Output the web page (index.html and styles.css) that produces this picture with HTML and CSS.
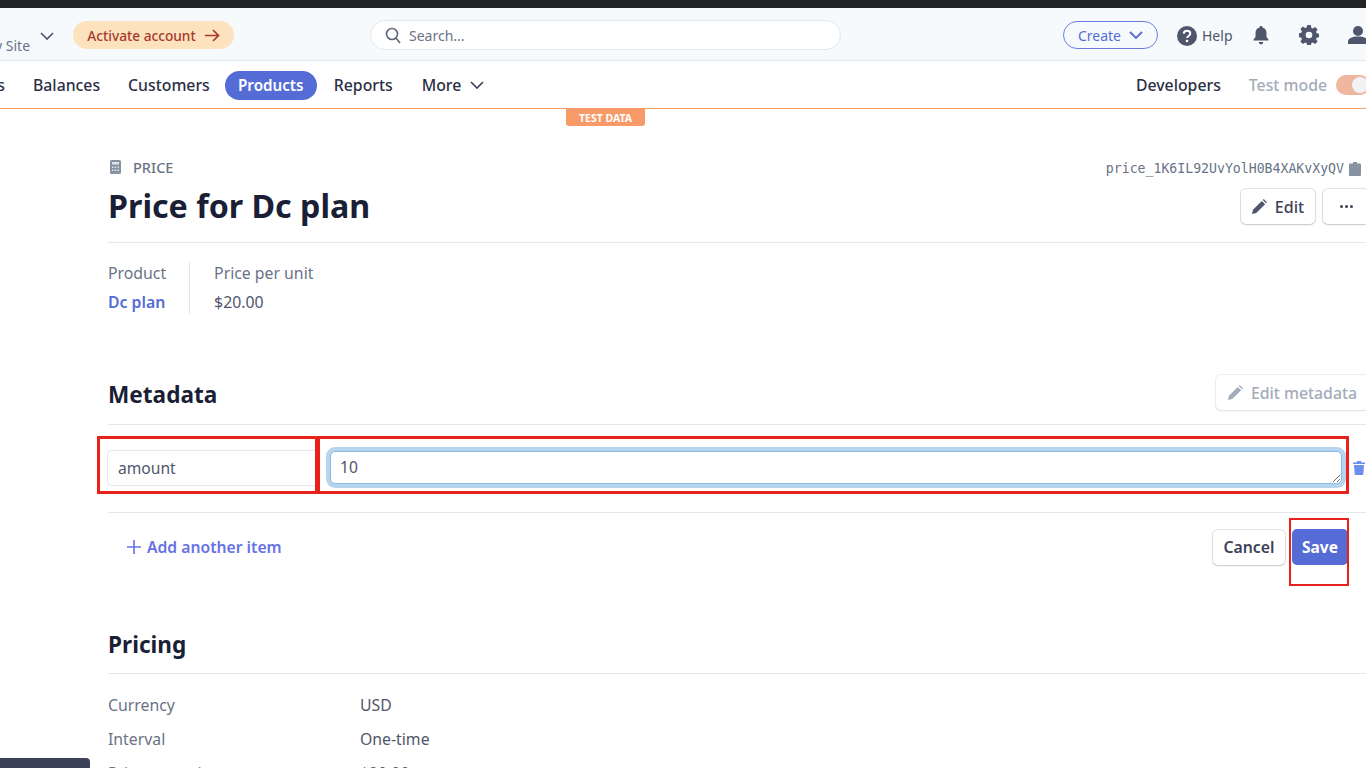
FILE: index.html
```html
<!DOCTYPE html>
<html>
<head>
<meta charset="utf-8">
<title>Price for Dc plan</title>
<link rel="stylesheet" href="styles.css">
</head>
<body>

<div class="browserStrip"></div>

<!-- top bar -->
<div class="topBar">
    <span class="siteName">y Site</span>
    <svg class="siteChevron" width="14" height="9" viewBox="0 0 14 9"><path d="M1 1l6 6 6-6" fill="none" stroke="#4f566b" stroke-width="1.6"/></svg>
    <a class="activatePill">Activate account
        <svg width="15" height="13" viewBox="0 0 15 13"><path d="M0 6.5h13M8 1l5.5 5.5L8 12" fill="none" stroke="#a8392b" stroke-width="1.7"/></svg>
    </a>
    <div class="searchBox">
        <svg width="16" height="17" viewBox="0 0 16 17"><circle cx="7" cy="7" r="5.5" fill="none" stroke="#5f6675" stroke-width="1.6"/><path d="M11 11l4 5" stroke="#5f6675" stroke-width="1.6"/></svg>
        <span>Search...</span>
    </div>
    <a class="createBtn">Create
        <svg width="14" height="9" viewBox="0 0 14 9"><path d="M1 1l6 6 6-6" fill="none" stroke="#556cd6" stroke-width="1.8"/></svg>
    </a>
    <svg class="helpIcon" width="20" height="20" viewBox="0 0 20 20"><circle cx="10" cy="10" r="10" fill="#4f566b"/><path d="M6.8 7.6C6.9 5.7 8.300 4.800 10 4.800c1.900 0 3.300 1.100 3.300 2.800 0 2.400-3.200 2.300-3.200 4.500" fill="none" stroke="#fff" stroke-width="2"/><circle cx="10" cy="15" r="1.300" fill="#fff"/></svg>
    <span class="helpText">Help</span>
    <svg class="bellIcon" width="16" height="19" viewBox="0 0 16 19"><path d="M8 0c1 0 1.500.6 1.500 1.400C12.200 2 13.500 4 13.500 7v4l2 2.500v1H.5v-1l2-2.500V7c0-3 1.300-5 4-5.600C6.500.6 7 0 8 0zM5.800 16h4.400c0 1.500-1 2.500-2.200 2.500S5.800 17.500 5.800 16z" fill="#4f566b"/></svg>
    <svg class="gearIcon" width="20" height="20" viewBox="0 0 20 20"><path d="M8.200 0h3.600l.5 2.700 1.500.7 2.400-1.500 2.400 2.500-1.500 2.300.6 1.500 2.700.6v3.400l-2.700.6-.6 1.500 1.500 2.300-2.400 2.500-2.400-1.500-1.500.7-.5 2.700H8.200l-.5-2.700-1.500-.7-2.400 1.500-2.400-2.500 1.500-2.300-.6-1.500L-.4 11.800V8.400l2.700-.6.6-1.500-1.500-2.300 2.400-2.500 2.400 1.500 1.500-.7z" fill="#4f566b"/><circle cx="10" cy="10" r="3.300" fill="#f7fafc"/></svg>
    <svg class="userIcon" width="20" height="18" viewBox="0 0 20 18"><circle cx="10" cy="5" r="5" fill="#4f566b"/><path d="M0 18v-2.500C0 12.500 4 10.500 10 10.500s10 2 10 5V18z" fill="#4f566b"/></svg>
</div>

<!-- nav bar -->
<div class="navBar">
    <a class="navCut">s</a>
    <a class="navItem">Balances</a>
    <a class="navItem">Customers</a>
    <a class="navItem navActive">Products</a>
    <a class="navItem">Reports</a>
    <a class="navItem navMore">More
        <svg width="14" height="9" viewBox="0 0 14 9"><path d="M1 1l6 6 6-6" fill="none" stroke="#3c4257" stroke-width="1.6"/></svg>
    </a>
    <a class="navItem navDev">Developers</a>
    <span class="testMode">Test mode</span>
    <span class="toggle"><span class="toggleKnob"></span></span>
    <span class="testBadge">TEST DATA</span>
</div>

<div class="content">

    <div class="priceHeader">
        <div>
            <div class="kicker">
                <svg width="11" height="14" viewBox="0 0 11 14"><rect width="11" height="14" rx="1.500" fill="#8792a2"/><rect x="2" y="2" width="7" height="2.500" fill="#dfe3e8"/><path d="M2 6.500h1.500V8H2zM4.700 6.500h1.500V8H4.700zM7.500 6.500H9V8H7.500zM2 9.500h1.500V11H2zM4.700 9.500h1.500V11H4.700zM7.500 9.500H9V11H7.500z" fill="#dfe3e8"/></svg>
                PRICE
            </div>
            <h1 class="pageTitle">Price for Dc plan</h1>
        </div>
        <div class="headerRight">
            <div class="priceId">price_1K6IL92UvYolH0B4XAKvXyQV
                <svg width="12" height="14" viewBox="0 0 12 14"><path d="M4 0h4v1.500h3a1 1 0 0 1 1 1V13a1 1 0 0 1-1 1H1a1 1 0 0 1-1-1V2.500a1 1 0 0 1 1-1h3z" fill="#8792a2"/></svg>
            </div>
            <div class="headerBtns">
                <a class="btn btnEdit">
                    <svg width="15" height="15" viewBox="0 0 16 16"><path d="M0 16l1-4.500L10.500 2l3.500 3.500L4.500 15zM11.500 1l1-1 3.500 3.500-1 1z" fill="#4f566b"/></svg>
                    Edit
                </a>
                <a class="btn btnDots"><i></i><i></i><i></i></a>
            </div>
        </div>
    </div>

    <div class="summary">
        <div class="summaryCol summaryFirst">
            <div class="summaryLabel">Product</div>
            <a class="summaryLink">Dc plan</a>
        </div>
        <div class="summaryCol">
            <div class="summaryLabel">Price per unit</div>
            <div class="summaryValue">$20.00</div>
        </div>
    </div>

    <div class="sectionHead metaHead">
        <h2 class="sectionTitle">Metadata</h2>
        <a class="btn btnEditMeta">
            <svg width="15" height="15" viewBox="0 0 16 16"><path d="M0 16l1-4.500L10.500 2l3.500 3.500L4.500 15zM11.500 1l1-1 3.500 3.500-1 1z" fill="#a3acb9"/></svg>
            Edit metadata
        </a>
    </div>

    <div class="metaRow">
        <input class="metaKey" type="text" value="amount">
        <textarea class="metaValue">10</textarea>
        <svg class="trash" width="12" height="14" viewBox="0 0 12 14"><path d="M4 0h4l.5 1.500H12V3H0V1.500h3.500zM1 4h10l-.8 10H1.800z" fill="#6c8eef"/></svg>
    </div>

    <div class="metaActions">
        <a class="addItem">
            <svg width="14" height="14" viewBox="0 0 14 14"><path d="M7 0v14M0 7h14" stroke="#6772e5" stroke-width="1.600"/></svg>
            Add another item
        </a>
        <a class="btn btnCancel">Cancel</a>
        <a class="btn btnSave">Save</a>
    </div>

    <div class="sectionHead pricingHead">
        <h2 class="sectionTitle">Pricing</h2>
    </div>

    <div class="detailList">
        <div class="detailRow"><span class="detailLabel">Currency</span><span>USD</span></div>
        <div class="detailRow"><span class="detailLabel">Interval</span><span>One-time</span></div>
        <div class="detailRow"><span class="detailLabel">Price per unit</span><span>$20.00</span></div>
    </div>
</div>

<!-- red boxes drawn on the screenshot -->
<div class="mark markKey"></div>
<div class="mark markValue"></div>
<div class="mark markSave"></div>

<div class="cornerTab"></div>

</body>
</html>
```

FILE: styles.css
```css
html, body
{
    margin: 0;
    height: 768px;
    overflow: hidden;
    background-color: white;
    font-family: "Noto Sans", "Open Sans", Arial, sans-serif;
    color: #3c4257;
}

a { cursor: pointer; }

.browserStrip
{
    height: 8px;
    background-color: #232428;
}

/* top bar */
.topBar
{
    height: 53px;
    box-sizing: border-box;
    padding-top: 2px;
    border-bottom: 1px solid #e3e8ee;
    background-color: #f7fafc;
    display: flex;
    align-items: center;
    white-space: nowrap;
    font-size: 14px;
}

.topBar > * { flex-shrink: 0; }

.siteName
{
    width: 38px;
    margin-left: -5px;
    margin-top: 20px;
    color: #697386;
}

.siteChevron { margin-left: 7px; margin-top: 2px; }

.activatePill
{
    margin-left: 19px;
    width: 161px;
    height: 28px;
    border-radius: 14px;
    background-color: #fde2bf;
    color: #a8392b;
    font-size: 13.7px;
    font-weight: 500;
    display: flex;
    align-items: center;
    justify-content: center;
    gap: 9px;
}

.searchBox
{
    margin-left: 136px;
    width: 471px;
    height: 30px;
    box-sizing: border-box;
    padding-left: 14px;
    border: 1px solid #e3e8ee;
    border-radius: 15px;
    background-color: white;
    color: #697386;
    display: flex;
    align-items: center;
    gap: 8px;
}

.createBtn
{
    margin-left: 222px;
    width: 95px;
    height: 28px;
    box-sizing: border-box;
    border: 1px solid #6c7fe0;
    border-radius: 14px;
    color: #556cd6;
    display: flex;
    align-items: center;
    justify-content: center;
    gap: 8px;
}

.helpIcon { margin-left: 19px; margin-top: 1px; }

.helpText
{
    margin-left: 5px;
    color: #4f566b;
}

.bellIcon { margin-left: 20px; }
.gearIcon { margin-left: 30px; }
.userIcon { margin-left: 29px; }

/* nav bar */
.navBar
{
    position: relative;
    height: 48px;
    box-sizing: border-box;
    padding-top: 1px;
    border-bottom: 1px solid #f79a68;
    display: flex;
    align-items: center;
    white-space: nowrap;
    font-size: 15.8px;
    font-weight: 500;
    color: #2a2f45;
}

.navCut { width: 5px; overflow: hidden; direction: rtl; }
.navItem { margin-left: 28px; }

.navActive
{
    margin-left: 15px;
    width: 92px;
    height: 29px;
    line-height: 28px;
    text-align: center;
    border-radius: 15px;
    background-color: #556cd6;
    color: white;
    font-size: 15.2px;
    font-weight: 600;
}

.navActive + .navItem { margin-left: 17px; }

.navMore
{
    margin-left: 29px;
    display: flex;
    align-items: center;
    gap: 9px;
}

.navDev { margin-left: auto; }

.testMode
{
    margin-left: 28px;
    margin-right: 1px;
    color: #a3acb9;
}

.toggle
{
    margin-left: 8px;
    margin-right: -4px;
    width: 34px;
    height: 20px;
    flex-shrink: 0;
    border-radius: 10px;
    background-color: #efb7a0;
    position: relative;
}

.toggleKnob
{
    position: absolute;
    right: 2px;
    top: 2px;
    width: 16px;
    height: 16px;
    border-radius: 8px;
    background-color: #f0f2f6;
}

.testBadge
{
    position: absolute;
    left: 566px;
    top: 48px;
    width: 79px;
    height: 17px;
    line-height: 18px;
    text-align: center;
    border-radius: 0 0 3px 3px;
    background-color: #f79a68;
    color: white;
    font-size: 10.5px;
    font-weight: 700;
}

/* page content */
.content { padding-left: 108px; }

.priceHeader
{
    height: 134px;
    box-sizing: border-box;
    border-bottom: 1px solid #e3e8ee;
    display: flex;
    justify-content: space-between;
}

.kicker
{
    margin-top: 49px;
    height: 18px;
    font-size: 14.5px;
    font-weight: 500;
    color: #697386;
    display: flex;
    align-items: center;
    gap: 12px;
}

.kicker svg { margin-left: 2px; }

.pageTitle
{
    margin: 9px 0 0 0;
    font-size: 32.2px;
    line-height: 42px;
    font-weight: 700;
    color: #1a1f36;
}

.headerRight
{
    display: flex;
    flex-direction: column;
    align-items: flex-end;
}

.priceId
{
    margin-top: 52px;
    margin-right: 5px;
    font-family: "DejaVu Sans Mono", "Liberation Mono", monospace;
    font-size: 13.2px;
    line-height: 16px;
    color: #697386;
    display: flex;
    align-items: center;
    gap: 5px;
}

.headerBtns
{
    margin-top: 12px;
    margin-right: -3px;
    display: flex;
    gap: 8px;
}

.btn
{
    box-sizing: border-box;
    display: flex;
    align-items: center;
    justify-content: center;
    border-radius: 5px;
    background-color: white;
    font-size: 16px;
    font-weight: 500;
    color: #3c4257;
    box-shadow: 0 0 0 1px rgba(60, 66, 87, 0.14), 0 1px 2px rgba(60, 66, 87, 0.18);
}

.btnEdit { width: 74px; height: 35px; gap: 8px; }
.btnDots { width: 46px; height: 35px; gap: 2px; }

.btnDots i
{
    width: 3px;
    height: 3px;
    border-radius: 50%;
    background-color: #3c4257;
}

.summary
{
    margin-top: 19px;
    display: flex;
    height: 52px;
}

.summaryCol { font-size: 15.8px; line-height: 29px; }

.summaryFirst
{
    padding-right: 23px;
    margin-right: 24px;
    border-right: 1px solid #e3e8ee;
}

.summaryLabel { color: #697386; margin-top: -3px; }
.summaryLink { color: #556cd6; font-weight: 600; }
.summaryValue { color: #4f566b; }

.sectionHead
{
    box-sizing: border-box;
    border-bottom: 1px solid #e3e8ee;
    display: flex;
    justify-content: space-between;
    align-items: center;
}

.metaHead
{
    margin-top: 43px;
    height: 68px;
    padding-top: 9px;
    padding-bottom: 5px;
}

.sectionTitle
{
    margin: 1px 0 0 0;
    font-size: 22.6px;
    line-height: 30px;
    font-weight: 700;
    color: #1a1f36;
}

.metaHead .sectionTitle { margin-top: 4px; }

.btnEditMeta
{
    width: 153px;
    height: 35px;
    margin-right: -3px;
    gap: 8px;
    font-size: 15.8px;
    color: #a3acb9;
    box-shadow: 0 0 0 1px rgba(60, 66, 87, 0.08), 0 1px 2px rgba(60, 66, 87, 0.1);
}

.metaRow
{
    height: 88px;
    box-sizing: border-box;
    padding-top: 25px;
    border-bottom: 1px solid #e3e8ee;
    display: flex;
    align-items: flex-start;
}

.metaKey, .metaValue
{
    box-sizing: border-box;
    font-family: inherit;
    font-size: 15.6px;
    color: #4f566b;
    outline: none;
    background-color: white;
}

.metaKey
{
    width: 209px;
    height: 36px;
    margin-left: -1px;
    padding: 0 10px;
    border: 1px solid #e3e8ee;
    border-right: none;
    border-radius: 5px 0 0 5px;
}

.metaValue
{
    width: 1012px;
    height: 33px;
    margin: 1px 0 0 14px;
    padding: 4px 9px;
    line-height: 22px;
    border: 1px solid #8fb8dc;
    border-radius: 5px;
    box-shadow: 0 0 0 4px #b5d5ee;
    resize: both;
}

.trash { margin: 11px 0 0 11px; flex-shrink: 0; }

.metaActions
{
    height: 68px;
    box-sizing: border-box;
    padding-right: 18px;
    display: flex;
    align-items: center;
    font-size: 15.7px;
}

.addItem
{
    margin-left: 19px;
    margin-right: auto;
    color: #6772e5;
    font-weight: 600;
    display: flex;
    align-items: center;
    gap: 6px;
}

.btnCancel { width: 72px; height: 35px; color: #3c4257; font-weight: 600; font-size: 15.8px; }

.btnSave
{
    width: 56px;
    height: 36px;
    margin-left: 7px;
    background-color: #556cd6;
    color: white;
    font-size: 15.5px;
    font-weight: 700;
    box-shadow: none;
}

.pricingHead
{
    margin-top: 48px;
    height: 45px;
    padding-bottom: 14px;
}

.detailList
{
    margin-top: 14px;
    font-size: 15.8px;
    color: #4f566b;
}

.detailRow
{
    height: 34px;
    line-height: 34px;
    display: flex;
}

.detailLabel { width: 252px; color: #697386; }

/* annotations and page corner */
.mark
{
    position: absolute;
    box-sizing: border-box;
    border: 3px solid #e8211a;
}

.markKey { left: 97px; top: 436px; width: 221px; height: 58px; }
.markValue { left: 317px; top: 436px; width: 1032px; height: 58px; }
.markSave { left: 1289px; top: 518px; width: 60px; height: 68px; border-width: 2px; }

.cornerTab
{
    position: absolute;
    left: 0;
    top: 758px;
    width: 90px;
    height: 10px;
    border-radius: 0 4px 0 0;
    background-color: #3c4257;
}
```
